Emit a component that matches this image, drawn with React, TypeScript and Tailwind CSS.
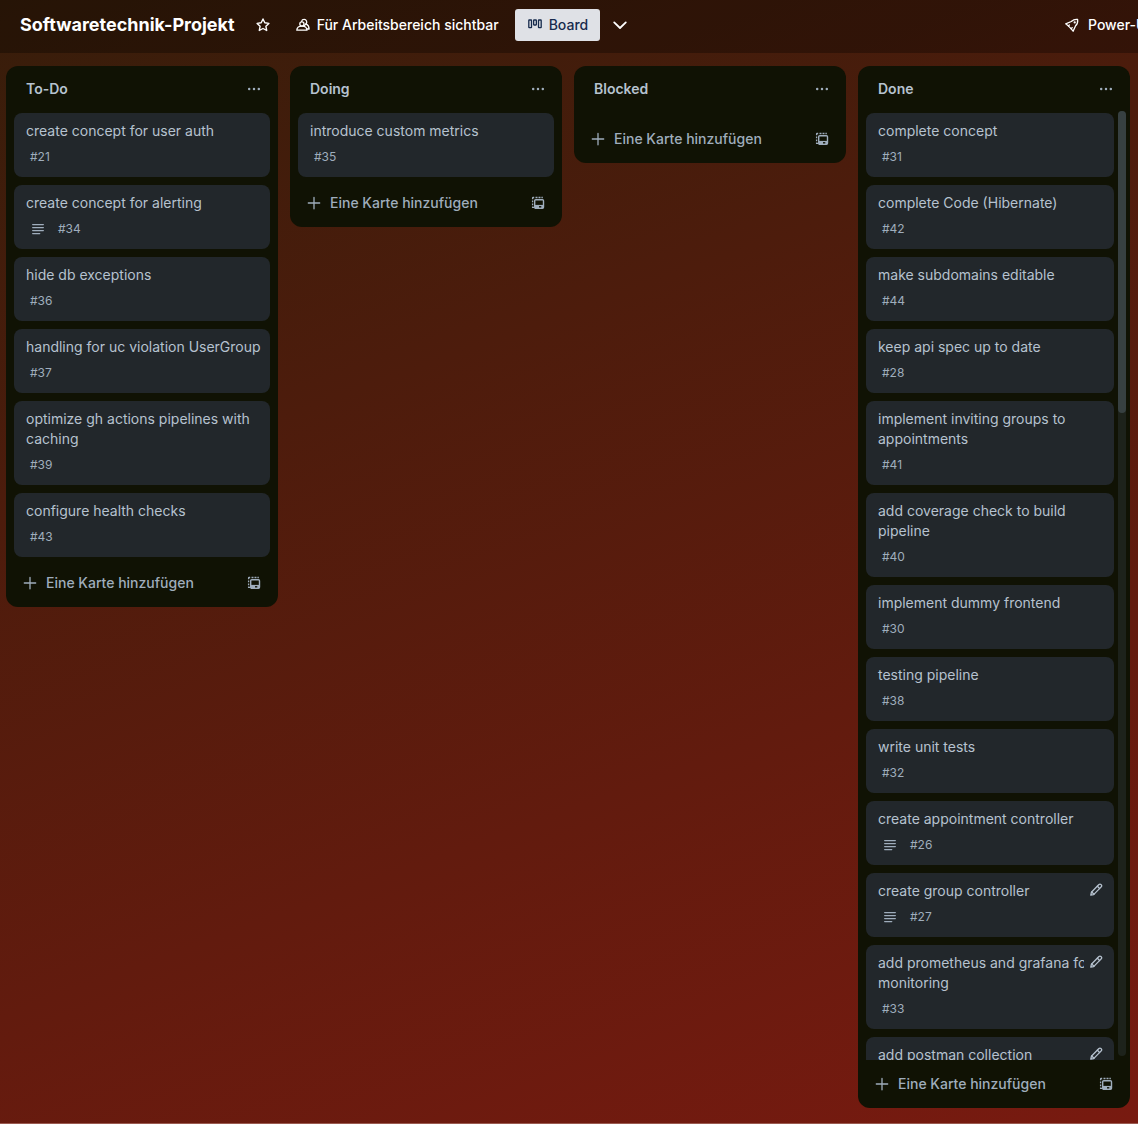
import React from "react";

type CardData = {
  title: string;
  id?: number;
  description?: boolean;
  editable?: boolean;
};

type ListData = {
  name: string;
  cards: CardData[];
  scrolls?: boolean;
};

const lists: ListData[] = [
  {
    name: "To-Do",
    cards: [
      { title: "create concept for user auth", id: 21 },
      { title: "create concept for alerting", id: 34, description: true },
      { title: "hide db exceptions", id: 36 },
      { title: "handling for uc violation UserGroup", id: 37 },
      { title: "optimize gh actions pipelines with caching", id: 39 },
      { title: "configure health checks", id: 43 },
    ],
  },
  { name: "Doing", cards: [{ title: "introduce custom metrics", id: 35 }] },
  { name: "Blocked", cards: [] },
  {
    name: "Done",
    scrolls: true,
    cards: [
      { title: "complete concept", id: 31 },
      { title: "complete Code (Hibernate)", id: 42 },
      { title: "make subdomains editable", id: 44 },
      { title: "keep api spec up to date", id: 28 },
      { title: "implement inviting groups to appointments", id: 41 },
      { title: "add coverage check to build pipeline", id: 40 },
      { title: "implement dummy frontend", id: 30 },
      { title: "testing pipeline", id: 38 },
      { title: "write unit tests", id: 32 },
      { title: "create appointment controller", id: 26, description: true },
      { title: "create group controller", id: 27, description: true, editable: true },
      { title: "add prometheus and grafana for monitoring", id: 33, editable: true },
      { title: "add postman collection", editable: true },
    ],
  },
];

function StarIcon() {
  return (
    <svg width="16" height="16" viewBox="0 0 16 16" fill="none" stroke="currentColor" strokeWidth="1.4" strokeLinejoin="round">
      <path d="M8 2 9.8 5.8 13.9 6.4 10.9 9.3 11.7 13.5 8 11.5 4.3 13.5 5.1 9.3 2.1 6.4 6.2 5.8Z" />
    </svg>
  );
}

function PeopleIcon() {
  return (
    <svg width="16" height="16" viewBox="0 0 16 16" fill="none" stroke="currentColor" strokeWidth="1.3" strokeLinejoin="round" strokeLinecap="round">
      <circle cx="6.9" cy="7" r="2.1" />
      <path d="M1.8 13.2c.1-2.6 2.2-4.1 5.1-4.1s5 1.5 5.1 4.1Z" />
      <path d="M6.6 4.3C6.9 3.1 7.9 2.4 9.1 2.4a2.6 2.6 0 0 1 1.9 4.4c1.8.9 3.1 2.7 3.1 5.2h-1.9" />
      <path d="M9.2 8.9 11 6.8" />
    </svg>
  );
}

function BoardIcon() {
  return (
    <svg width="16" height="16" viewBox="0 0 16 16" fill="none" stroke="currentColor" strokeWidth="1.3">
      <rect x="1.8" y="3" width="2.7" height="7.6" rx=".4" />
      <rect x="6.65" y="3" width="2.7" height="5" rx=".4" />
      <rect x="11.5" y="3" width="2.7" height="7.6" rx=".4" />
    </svg>
  );
}

function ChevronIcon() {
  return (
    <svg width="16" height="16" viewBox="0 0 16 16" fill="none" stroke="currentColor" strokeWidth="1.8" strokeLinecap="round" strokeLinejoin="round">
      <path d="M2.2 5.4 8 11 13.8 5.4" />
    </svg>
  );
}

function RocketIcon() {
  return (
    <svg width="16" height="16" viewBox="0 0 16 16" fill="none" stroke="currentColor" strokeWidth="1.3" strokeLinejoin="round" strokeLinecap="round">
      <path d="M13.6 2.5C11 2.1 9 3 7.300 4.500L1.700 6.800l2.800 2.300 2.500 2.500L9.100 14.200l2.500-5.400c1.700-1.700 2.400-3.700 2-6.300Z" />
      <path d="M4.500 9.100 5.400 7.900M7 11.600 8.200 10.700" />
      <circle cx="10.700" cy="5.400" r=".5" />
    </svg>
  );
}

function DotsIcon() {
  return (
    <svg width="16" height="16" viewBox="0 0 16 16" fill="currentColor">
      <circle cx="3.2" cy="8" r="1.25" />
      <circle cx="8" cy="8" r="1.25" />
      <circle cx="12.8" cy="8" r="1.25" />
    </svg>
  );
}

function PlusIcon() {
  return (
    <svg width="16" height="16" viewBox="0 0 16 16" fill="none" stroke="currentColor" strokeWidth="1.3" strokeLinecap="round">
      <path d="M8 2.4v11.4M2.3 8h11.4" />
    </svg>
  );
}

function TemplateIcon() {
  return (
    <svg width="16" height="16" viewBox="0 0 16 16" fill="none" stroke="currentColor" strokeWidth="1.4">
      <rect x="4.7" y="4.7" width="8.8" height="8.6" rx="1" />
      <path d="M5 10.500h8.400" strokeWidth="1.200" />
      <path d="M5 11h4v2H5zM11.300 11h2v2h-2z" fill="currentColor" stroke="none" />
      <path d="M2.600 4.300V3c0-.300.200-.500.500-.500H4.200M5.500 2.500h2M8.500 2.500h2M11.400 2.500h1.400M2.600 5.500v1.800M2.600 8.500v1.800M2.600 11.500v.9h1.400" strokeWidth="1.300" />
    </svg>
  );
}

function DescriptionIcon() {
  return (
    <svg width="16" height="16" viewBox="0 0 16 16" fill="none" stroke="currentColor" strokeWidth="1.4" strokeLinecap="round">
      <path d="M2.700 3.600h10.600M2.700 6.600h10.600M2.700 9.600h10.600M2.700 12.600h7" />
    </svg>
  );
}

function PencilIcon() {
  return (
    <svg width="16" height="16" viewBox="0 0 16 16" fill="none" stroke="currentColor" strokeWidth="1.3" strokeLinejoin="round" strokeLinecap="round">
      <path d="M10.200 3.300 11 2.500c.600-.600 1.300-.600 1.900 0l.4.4c.600.600.600 1.300 0 1.900l-.8.8-6.900 7L2.800 13.200l.600-2.900Z" />
      <path d="M9.400 4.300 11.600 6.500M3.700 10 6 12.200" />
    </svg>
  );
}

function Card({ card }: { card: CardData }) {
  return (
    <li className="relative shrink-0 rounded-lg bg-[#22272b] pt-2 pr-2 pb-1 pl-3 text-[#b6c2cf]">
      <h3 className="mb-1 text-sm leading-5">{card.title}</h3>
      {card.editable && (
        <button
          type="button"
          aria-label={`Karte bearbeiten: ${card.title}`}
          className="absolute top-[5px] right-1.5 flex size-6 items-center justify-center bg-[#22272b]"
        >
          <PencilIcon />
        </button>
      )}
      <div className="flex h-7 items-start gap-1 pt-1 text-xs leading-4 text-[#9fadbc]">
        {card.description && (
          <span className="flex w-6 justify-center">
            <DescriptionIcon />
          </span>
        )}
        {card.id !== undefined && <span className="px-1">#{card.id}</span>}
      </div>
    </li>
  );
}

function List({ list }: { list: ListData }) {
  return (
    <section className="flex max-h-full w-68 shrink-0 flex-col rounded-xl bg-[#101204] text-[#9fadbc]">
      <header className="flex h-[47px] shrink-0 items-center justify-between pr-2 pb-0.5 pl-5">
        <h2 className="text-sm leading-5 font-semibold text-[#b6c2cf]">{list.name}</h2>
        <button type="button" aria-label={`Listenmenü ${list.name}`} className="flex size-8 items-center justify-center rounded-lg">
          <DotsIcon />
        </button>
      </header>
      <div className="relative flex min-h-0 flex-col">
        <ol className={`flex min-h-0 flex-col gap-2 overflow-y-auto pl-2 [scrollbar-width:none] ${list.scrolls ? "pr-4" : "pr-2"}`}>
          {list.cards.map((card) => (
            <Card key={card.title} card={card} />
          ))}
        </ol>
        {list.scrolls && (
          <div className="absolute -top-0.5 right-1 bottom-1 w-2 rounded-full bg-[#1d221b]">
            <div className="h-[32%] rounded-full bg-[#374041]" />
          </div>
        )}
      </div>
      <footer className={`flex shrink-0 items-center justify-between px-2 pb-2 ${list.scrolls ? "pt-2" : "pt-2.5"}`}>
        <button type="button" className="flex h-8 items-center gap-2 rounded-lg px-2 text-sm font-medium">
          <PlusIcon />
          Eine Karte hinzufügen
        </button>
        <button type="button" aria-label="Aus Vorlage erstellen" className="flex size-8 items-center justify-center rounded-lg">
          <TemplateIcon />
        </button>
      </footer>
    </section>
  );
}

export default function App() {
  return (
    <div className="flex h-screen flex-col overflow-hidden border-b border-[#9a5a50] bg-linear-[160deg,#371d0a_0%,#781a10_100%] font-['Inter',sans-serif]">
      <header className="flex h-[53px] shrink-0 items-center justify-between overflow-hidden bg-black/30 pb-1 pl-5 text-white">
        <div className="flex shrink-0 items-center">
          <h1 className="text-lg leading-8 font-bold">Softwaretechnik-Projekt</h1>
          <button type="button" aria-label="Board markieren" className="ml-3 flex size-8 items-center justify-center">
            <StarIcon />
          </button>
          <button type="button" className="ml-2 flex h-8 items-center gap-1.5 px-2 text-sm font-medium">
            <PeopleIcon />
            Für Arbeitsbereich sichtbar
          </button>
          <button type="button" className="ml-2 flex h-8 items-center gap-1.5 rounded-[3px] bg-[#dfe1e6] px-3 text-sm font-medium text-[#172b4d]">
            <BoardIcon />
            Board
          </button>
          <button type="button" aria-label="Ansichten" className="ml-1 flex size-8 items-center justify-center">
            <ChevronIcon />
          </button>
        </div>
        <button type="button" className="flex h-8 w-[74px] shrink-0 items-center gap-2 overflow-hidden text-sm font-medium whitespace-nowrap">
          <span className="shrink-0">
            <RocketIcon />
          </span>
          Power-Ups
        </button>
      </header>
      <main className="flex min-h-0 flex-1 items-start gap-3 overflow-x-auto px-1.5 pt-[13px] pb-[15px] [scrollbar-width:none]">
        {lists.map((list) => (
          <List key={list.name} list={list} />
        ))}
      </main>
    </div>
  );
}
